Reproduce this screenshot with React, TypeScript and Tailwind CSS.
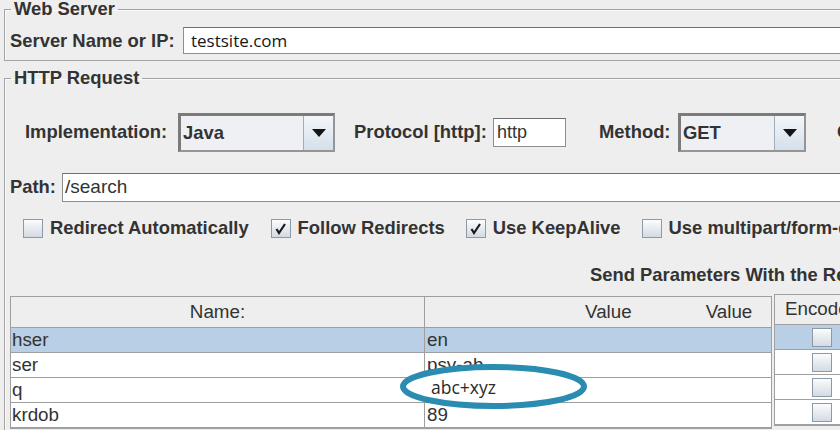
import React from "react";

const label = "text-[18.4px] font-bold text-[#333] whitespace-nowrap leading-none";
const cell = "text-[18.8px] text-[#333] whitespace-nowrap leading-none";

function Arrow() {
  return (
    <svg width="14" height="8" viewBox="0 0 14 8">
      <polygon points="0,0 14,0 7,8" fill="#151515" />
    </svg>
  );
}

function Combo({ value, width }: { value: string; width: string }) {
  return (
    <div
      className={`flex h-[39px] ${width} border-2 border-[#7b7b7b] border-t-[3px] border-l-[3px] border-b-[#959595] border-r-[#959595] bg-[#eef0f3]`}
    >
      <div className={`flex flex-1 items-center pl-[2px] ${label} text-[#2b2b2b]`}>{value}</div>
      <div className="flex w-[30px] items-center justify-center border-l border-[#a3adb8] bg-linear-to-b from-[#f4f7fa] to-[#d4dfea]">
        <Arrow />
      </div>
    </div>
  );
}

function Check({ checked }: { checked?: boolean }) {
  return (
    <span className="flex h-[19px] w-[20px] shrink-0 items-center justify-center border border-[#8c99a6] bg-linear-to-b from-[#fbfcfd] to-[#d3dbe3]">
      {checked && (
        <svg width="13" height="13" viewBox="0 0 13 13">
          <path d="M2.5 7 L5 11 L11 2" stroke="#1a1a1a" strokeWidth="2.2" fill="none" />
        </svg>
      )}
    </span>
  );
}

function CheckItem({ text, checked, className }: { text: string; checked?: boolean; className?: string }) {
  return (
    <div className={`flex items-center ${className ?? ""}`}>
      <Check checked={checked} />
      <span className={`ml-[7px] ${label}`}>{text}</span>
    </div>
  );
}

const rows = [
  { name: "hser", value: "en", selected: true },
  { name: "ser", value: "psy-ab" },
  { name: "q", value: "" },
  { name: "krdob", value: "89" },
];

export default function App() {
  return (
    <div className="relative h-[430px] w-[840px] overflow-hidden bg-[#eeeeee] font-['Liberation_Sans',Arial,sans-serif]">
      <div className="pl-[4px]">
        {/* Web Server */}
        <fieldset className="w-[900px] border border-[#a3a3a3] shadow-[inset_1px_1px_0_#fafafa]">
          <legend className={`ml-[6px] px-[3px] ${label} leading-[17px]`}>Web Server</legend>
          <div className="flex items-center pl-[5px] pt-[9px] pb-[6px]">
            <span className={`w-[173px] ${label}`}>Server Name or IP:</span>
            <div className="flex h-[27px] flex-1 items-center border border-[#8d8d8d] border-t-[#6f6f6f] bg-white pl-[7px] font-['Open_Sans',sans-serif] text-[17px] text-[#161616]">
              testsite.com
            </div>
          </div>
        </fieldset>

        {/* HTTP Request */}
        <fieldset className="mt-[8px] h-[400px] w-[900px] border border-[#a3a3a3] shadow-[inset_1px_1px_0_#fafafa]">
          <legend className={`ml-[6px] px-[3px] ${label} leading-[17px]`}>HTTP Request</legend>
          <div className="pl-[5px]">
            <div className="mt-[25px] flex h-[39px] items-center">
              <span className={`ml-[15px] w-[153px] ${label}`}>Implementation:</span>
              <Combo value="Java" width="w-[157px]" />
              <span className={`ml-[19px] w-[139px] ${label}`}>Protocol [http]:</span>
              <div className="flex h-[29px] w-[73px] items-center border border-[#8d8d8d] border-t-[#6f6f6f] bg-white pl-[3px] text-[18px] text-[#333]">
                http
              </div>
              <span className={`ml-[33px] w-[79px] ${label}`}>Method:</span>
              <Combo value="GET" width="w-[128px]" />
              <span className={`ml-[31px] ${label}`}>Content encoding:</span>
            </div>

            <div className="mt-[21px] flex items-center">
              <span className={`w-[52px] ${label}`}>Path:</span>
              <div className="flex h-[29px] flex-1 items-center border border-[#8d8d8d] border-t-[#6f6f6f] bg-white pl-[2px] text-[19px] text-[#333]">
                /search
              </div>
            </div>

            <div className="mt-[17px] flex items-center">
              <CheckItem text="Redirect Automatically" className="ml-[13px]" />
              <CheckItem text="Follow Redirects" checked className="ml-[22px]" />
              <CheckItem text="Use KeepAlive" checked className="ml-[21px]" />
              <CheckItem text="Use multipart/form-data for POST" className="ml-[21px]" />
            </div>

            <div className={`mt-[28px] pl-[580px] ${label}`}>Send Parameters With the Request:</div>

            <div className="mt-[12px] flex items-start">
              <div className="w-[762px] border border-[#9f9f9f] bg-white">
                <div className="flex h-[31px] border-b border-[#9f9f9f] bg-[#eeeeee]">
                  <div className={`flex w-[414px] items-center justify-center border-r border-[#9f9f9f] ${cell}`}>
                    Name:
                  </div>
                  <div className={`flex flex-1 items-center pl-[160px] ${cell}`}>
                    <span>Value</span>
                    <span className="ml-[74px]">Value</span>
                  </div>
                </div>
                {rows.map((r) => (
                  <div
                    key={r.name}
                    className={`flex h-[25px] border-b border-[#9f9f9f] ${r.selected ? "bg-[#b8cfe5]" : "bg-white"}`}
                  >
                    <div className={`flex w-[414px] items-center border-r border-[#9f9f9f] pl-[1px] ${cell}`}>
                      {r.name}
                    </div>
                    <div className={`flex flex-1 items-center pl-[2px] ${cell}`}>{r.value}</div>
                  </div>
                ))}
              </div>

              <div className="ml-[2px] mt-[-2px] w-[96px] border border-[#9f9f9f] bg-white">
                <div className={`flex h-[30px] items-center border-b border-[#9f9f9f] bg-[#eeeeee] pl-[10px] ${cell}`}>
                  Encode?
                </div>
                {rows.map((r) => (
                  <div
                    key={r.name}
                    className={`flex h-[25px] items-center justify-center border-b border-[#9f9f9f] ${r.selected ? "bg-[#b8cfe5]" : "bg-white"}`}
                  >
                    <Check />
                  </div>
                ))}
              </div>
            </div>
          </div>
        </fieldset>
      </div>

      {/* hand-drawn highlight over the "q" value */}
      <svg className="absolute left-[397px] top-[361px]" width="194" height="51" viewBox="0 0 194 51">
        <ellipse cx="96.5" cy="25.5" rx="90.5" ry="19.5" fill="#ffffff" stroke="#2a8cb0" strokeWidth="6" />
      </svg>
      <div className="absolute left-[431px] top-[376px] font-['Open_Sans',sans-serif] text-[17.5px] leading-[22px] text-[#2a2a2a]">
        abc+xyz
      </div>
    </div>
  );
}
